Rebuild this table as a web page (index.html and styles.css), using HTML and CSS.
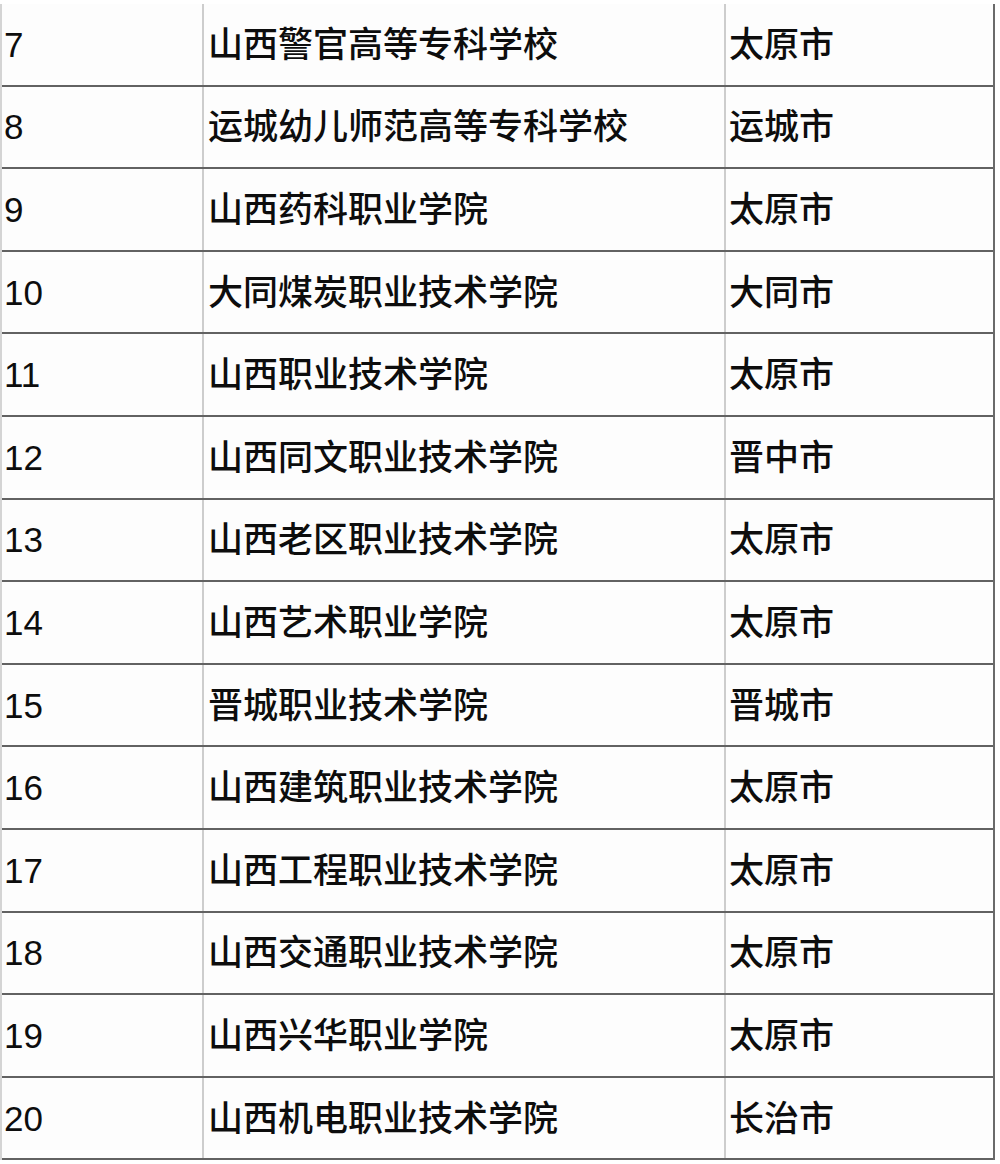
FILE: index.html
```html
<!DOCTYPE html>
<html lang="zh-CN">
<head>
<meta charset="utf-8">
<title>山西高职院校</title>
<link rel="stylesheet" href="styles.css">
</head>
<body>
<div class="table">
  <div class="row"><div class="cell num">7</div><div class="cell name">山西警官高等专科学校</div><div class="cell city">太原市</div></div>
  <div class="row"><div class="cell num">8</div><div class="cell name">运城幼儿师范高等专科学校</div><div class="cell city">运城市</div></div>
  <div class="row"><div class="cell num">9</div><div class="cell name">山西药科职业学院</div><div class="cell city">太原市</div></div>
  <div class="row"><div class="cell num">10</div><div class="cell name">大同煤炭职业技术学院</div><div class="cell city">大同市</div></div>
  <div class="row"><div class="cell num">11</div><div class="cell name">山西职业技术学院</div><div class="cell city">太原市</div></div>
  <div class="row"><div class="cell num">12</div><div class="cell name">山西同文职业技术学院</div><div class="cell city">晋中市</div></div>
  <div class="row"><div class="cell num">13</div><div class="cell name">山西老区职业技术学院</div><div class="cell city">太原市</div></div>
  <div class="row"><div class="cell num">14</div><div class="cell name">山西艺术职业学院</div><div class="cell city">太原市</div></div>
  <div class="row"><div class="cell num">15</div><div class="cell name">晋城职业技术学院</div><div class="cell city">晋城市</div></div>
  <div class="row"><div class="cell num">16</div><div class="cell name">山西建筑职业技术学院</div><div class="cell city">太原市</div></div>
  <div class="row"><div class="cell num">17</div><div class="cell name">山西工程职业技术学院</div><div class="cell city">太原市</div></div>
  <div class="row"><div class="cell num">18</div><div class="cell name">山西交通职业技术学院</div><div class="cell city">太原市</div></div>
  <div class="row"><div class="cell num">19</div><div class="cell name">山西兴华职业学院</div><div class="cell city">太原市</div></div>
  <div class="row"><div class="cell num">20</div><div class="cell name">山西机电职业技术学院</div><div class="cell city">长治市</div></div>
</div>
</body>
</html>
```
FILE: styles.css
```css
html, body {
  margin: 0;
  padding: 0;
  background: #ffffff;
}
body {
  padding-top: 4px;
  font-family: "Liberation Sans", "Noto Sans CJK SC", sans-serif;
  color: #0d0d0d;
}
.table {
  width: 995px;
  border-left: 2px solid #d4d4d4;
  border-right: 2px solid #6a6a6a;
  box-sizing: border-box;
  background: #fdfdfd;
}
.row {
  display: grid;
  grid-template-columns: 202px 522px 1fr;
  height: 82.6px;
  box-sizing: border-box;
  border-bottom: 2px solid #626262;
}
.cell {
  display: flex;
  align-items: center;
  font-size: 35px;
  line-height: 1;
  white-space: nowrap;
}
.num {
  padding-left: 2px;
  border-right: 2px solid #cdcdcd;
}
.name {
  padding-left: 4px;
  border-right: 2px solid #cdcdcd;
  font-weight: 500;
}
.city {
  padding-left: 3px;
  font-weight: 500;
}
```
